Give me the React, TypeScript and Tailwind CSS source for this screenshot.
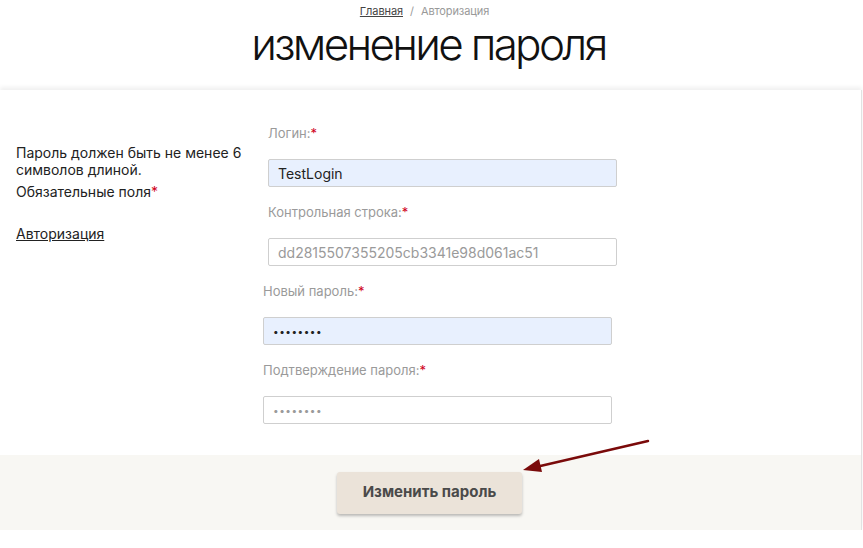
import React from 'react';

const Req = () => <span className="text-[#d0021b]">*</span>;

const Field: React.FC<{ label: string; value: string; filled?: boolean; muted?: boolean; shift?: boolean; mono?: boolean }> = ({ label, value, filled, muted, shift, mono }) => (
  <div className={shift ? '-ml-[5px]' : ''}>
    <div className="h-[34px] text-[13px] leading-[16px] text-[#9a9a9a]">
      {label}:<Req />
    </div>
    <div
      className={`flex h-[28px] w-[349px] items-center rounded-[2px] border border-[#cfcfcf] px-[9px] ${filled ? 'bg-[#e8f0fe]' : 'bg-white'}`}
    >
      <span className={`${muted ? 'text-[#9a9a9a]' : 'text-[#222]'} ${mono ? 'text-[10px] tracking-[0.5px]' : 'text-[14px]'}`}>{value}</span>
    </div>
  </div>
);

export default function App() {
  return (
    <div className="relative min-h-[548px] bg-white font-['Inter',sans-serif]">
      <header className="flex h-[90px] flex-col items-center pt-[3px]">
        <div className="-ml-[14px] text-[11px] leading-[16px] tracking-[-0.1px]">
          <span className="text-[#444] underline">Главная</span>
          <span className="mx-[7px] text-[#999]">/</span>
          <span className="text-[#999]">Авторизация</span>
        </div>
        <h1 className="-ml-[6px] mt-[0px] text-[44px] leading-[50px] font-light tracking-[-2.7px] text-[#111]">изменение пароля</h1>
      </header>

      <main className="mr-[1px] border-r border-[#e2e2e2] shadow-[0_-3px_4px_rgba(0,0,0,0.06)]">
        <div className="flex pt-[35px] pb-[31px]">
          <div className="w-[268px] pl-[16px] pt-[19px] text-[14px] text-[#222]">
            <p className="leading-[17px]">
              Пароль должен быть не менее 6<br />символов длиной.
            </p>
            <p className="mt-[5px] leading-[17px]">
              Обязательные поля<Req />
            </p>
            <p className="mt-[25px] leading-[17px] underline">Авторизация</p>
          </div>
          <div className="flex flex-col gap-[17px]">
            <Field label="Логин" value="TestLogin" filled />
            <Field label="Контрольная строка" value="dd2815507355205cb3341e98d061ac51" muted />
            <Field label="Новый пароль" value="••••••••" filled shift mono />
            <Field label="Подтверждение пароля" value="••••••••" muted shift mono />
          </div>
        </div>
        <div className="flex h-[75px] items-center justify-center bg-[#f8f7f3]">
          <button className="-ml-[2px] h-[42px] w-[185px] rounded-[3px] bg-[#ebe3d9] text-[15px] font-bold text-[#4a4a4a] shadow-[0_2px_3px_rgba(0,0,0,0.25)]">
            Изменить пароль
          </button>
        </div>
      </main>

      <svg className="pointer-events-none absolute left-0 top-0" width="863" height="548">
        <line x1="648" y1="441" x2="536" y2="467" stroke="#7a0a0a" strokeWidth="2.5" strokeLinecap="round" />
        <polygon points="523,470 539,459 542,472" fill="#7a0a0a" />
      </svg>
    </div>
  );
}
